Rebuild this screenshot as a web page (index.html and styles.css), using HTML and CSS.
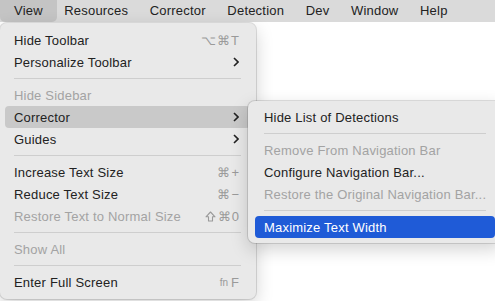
FILE: index.html
```html
<!DOCTYPE html>
<html lang="en">
<head>
    <meta charset="UTF-8">
    <title>View Menu</title>
    <link rel="stylesheet" href="styles.css">
</head>
<body>

    <!-- Menu Bar -->
    <div class="menubar">
        <span class="bar-item open">View</span>
        <span class="bar-item">Resources</span>
        <span class="bar-item">Corrector</span>
        <span class="bar-item">Detection</span>
        <span class="bar-item">Dev</span>
        <span class="bar-item">Window</span>
        <span class="bar-item">Help</span>
    </div>

    <!-- View Menu -->
    <div class="menu main-menu">
        <div class="item"><span class="label">Hide Toolbar</span><span class="keys">⌥⌘T</span></div>
        <div class="item"><span class="label">Personalize Toolbar</span><svg class="chevron" width="6" height="10" viewBox="0 0 6 10"><path d="M1 1 L5 5 L1 9" /></svg></div>
        <div class="sep"></div>
        <div class="item disabled"><span class="label">Hide Sidebar</span></div>
        <div class="item selected"><span class="label">Corrector</span><svg class="chevron" width="6" height="10" viewBox="0 0 6 10"><path d="M1 1 L5 5 L1 9" /></svg></div>
        <div class="item"><span class="label">Guides</span><svg class="chevron" width="6" height="10" viewBox="0 0 6 10"><path d="M1 1 L5 5 L1 9" /></svg></div>
        <div class="sep"></div>
        <div class="item"><span class="label">Increase Text Size</span><span class="keys">⌘+</span></div>
        <div class="item"><span class="label">Reduce Text Size</span><span class="keys">⌘−</span></div>
        <div class="item disabled"><span class="label">Restore Text to Normal Size</span><span class="keys"><svg class="shift" width="11" height="11" viewBox="0 0 11 11"><path d="M5.5 1 L10 5.8 H7.5 V10 H3.5 V5.8 H1 Z" /></svg>⌘0</span></div>
        <div class="sep"></div>
        <div class="item disabled"><span class="label">Show All</span></div>
        <div class="sep"></div>
        <div class="item"><span class="label">Enter Full Screen</span><span class="keys"><small>fn</small> F</span></div>
    </div>

    <!-- Corrector Submenu -->
    <div class="menu submenu">
        <div class="item"><span class="label">Hide List of Detections</span></div>
        <div class="sep"></div>
        <div class="item disabled"><span class="label">Remove From Navigation Bar</span></div>
        <div class="item"><span class="label">Configure Navigation Bar...</span></div>
        <div class="item disabled"><span class="label">Restore the Original Navigation Bar...</span></div>
        <div class="sep"></div>
        <div class="item active"><span class="label">Maximize Text Width</span></div>
    </div>

</body>
</html>
```

FILE: styles.css
```css
/* General Styling */
body {
    font-family: "Liberation Sans", Arial, sans-serif;
    font-size: 13px;
    letter-spacing: 0.2px;
    color: #222;
    background-color: #fff;
    margin: 0;
    width: 495px;
    height: 301px;
    overflow: hidden;
    position: relative;
}

/* Menu Bar */
.menubar {
    display: flex;
    height: 22px;
    line-height: 22px;
    background-color: #dadada;
}

.bar-item {
    padding: 0 10.8px;
}

.bar-item.open {
    padding: 0 14px;
    margin-right: -3.3px;
    background-color: #c4c4c4;
    border-radius: 0 0 5px 5px;
}

/* Menus */
.menu {
    position: absolute;
    box-sizing: border-box;
    background-color: #e9e9e9;
    border-radius: 7px;
    box-shadow: 0 0 0 1px rgba(0, 0, 0, 0.12), 0 6px 18px rgba(0, 0, 0, 0.18);
}

.main-menu {
    top: 23px;
    left: 0;
    width: 256px;
    padding: 6px 6px 6px 5px;
}

.submenu {
    top: 101px;
    left: 248px;
    width: 254px;
    padding: 5px 7px;
}

.item {
    display: flex;
    align-items: center;
    height: 22px;
    padding: 0 10px 0 9px;
    border-radius: 4px;
}

.item .label {
    flex: 1;
    white-space: nowrap;
}

.item.disabled {
    color: #a3a3a3;
}

.item.selected {
    background-color: #c9c9c9;
}

.item.active {
    background-color: #1f5bd7;
    color: #fff;
}

.keys {
    display: flex;
    align-items: center;
    color: #9a9a9a;
    letter-spacing: 1px;
    font-size: 13px;
    white-space: nowrap;
}

.keys small {
    font-size: 10px;
    letter-spacing: 0;
    margin-right: 3px;
}

.shift {
    fill: none;
    stroke: #9a9a9a;
    stroke-width: 1.1;
    stroke-linejoin: round;
    margin-right: 2px;
}

.chevron {
    fill: none;
    stroke: #222;
    stroke-width: 1.6;
    margin-right: 1px;
}

.sep {
    height: 11px;
    display: flex;
    align-items: center;
    padding: 0 9px;
}

.sep::before {
    content: "";
    flex: 1;
    height: 1px;
    background-color: #cecece;
}
```
